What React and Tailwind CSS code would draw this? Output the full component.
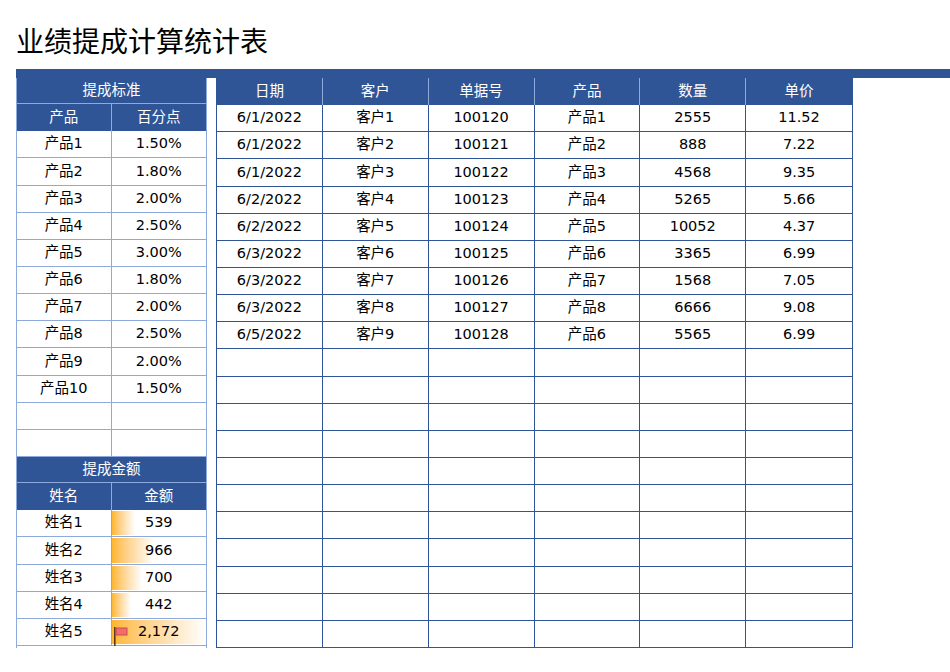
const F = { fontFamily: '"DejaVu Sans","Noto Sans CJK SC",sans-serif' };
const prods = [["产品1","1.50%"],["产品2","1.80%"],["产品3","2.00%"],["产品4","2.50%"],["产品5","3.00%"],["产品6","1.80%"],["产品7","2.00%"],["产品8","2.50%"],["产品9","2.00%"],["产品10","1.50%"],["",""],["",""]];
const amts = [["姓名1",539],["姓名2",966],["姓名3",700],["姓名4",442],["姓名5",2172]];
const rows = [
["6/1/2022","客户1","100120","产品1","2555","11.52"],
["6/1/2022","客户2","100121","产品2","888","7.22"],
["6/1/2022","客户3","100122","产品3","4568","9.35"],
["6/2/2022","客户4","100123","产品4","5265","5.66"],
["6/2/2022","客户5","100124","产品5","10052","4.37"],
["6/3/2022","客户6","100125","产品6","3365","6.99"],
["6/3/2022","客户7","100126","产品7","1568","7.05"],
["6/3/2022","客户8","100127","产品8","6666","9.08"],
["6/5/2022","客户9","100128","产品6","5565","6.99"],
];
while (rows.length < 20) rows.push(["","","","","",""]);
const H = "h-[26.15px] flex items-center justify-center";
const HH = "h-[27.15px] flex items-center justify-center";
export default function App() {
  return (
    <div className="w-[950px] h-[672px] bg-white text-[14.5px] text-black" style={F}>
      <div className="pl-[16px] pt-[25px] h-[69px] text-[28px] leading-[36px]">业绩提成计算统计表</div>
      <div className="ml-[16px] h-[9px] bg-[#2f5597]"></div>
      <div className="flex ml-[16px] gap-[9px]">
        <div className="w-[191px] border-x border-[#8ea9db]">
          <div className={`${H} bg-[#2f5597] text-white border-b border-[#8ea9db]`}>提成标准</div>
          <div className="grid grid-cols-2 bg-[#2f5597] text-white">
            <div className={`${HH} border-r border-[#8ea9db]`}>产品</div><div className={HH}>百分点</div>
          </div>
          {prods.map((p, i) => (
            <div key={i} className="grid grid-cols-2 border-b border-[#8ea9db]">
              <div className={`${H} border-r border-[#8ea9db]`}>{p[0]}</div><div className={H}>{p[1]}</div>
            </div>
          ))}
          <div className={`${H} bg-[#2f5597] text-white border-b border-[#8ea9db]`}>提成金额</div>
          <div className="grid grid-cols-2 bg-[#2f5597] text-white">
            <div className={`${HH} border-r border-[#8ea9db]`}>姓名</div><div className={HH}>金额</div>
          </div>
          {amts.map((a, i) => (
            <div key={i} className="grid grid-cols-2 border-b border-[#8ea9db]">
              <div className={`${H} border-r border-[#8ea9db]`}>{a[0]}</div>
              <div className={`${H} relative`}>
                <div className="absolute left-0 top-[1px] bottom-[1px] bg-gradient-to-r from-[#ffb628] to-white" style={{ width: `${(a[1] / 2172) * 100}%` }}></div>
                {i === 4 && (
                  <svg className="absolute left-[2px] top-[8px]" width="14" height="19" viewBox="0 0 14 19">
                    <rect x="0" y="0" width="1.6" height="19" fill="#5a3a1a" />
                    <rect x="2" y="1" width="11" height="7" fill="#f8696b" stroke="#c0504d" strokeWidth="1" />
                  </svg>
                )}
                <span className="relative">{a[1].toLocaleString("en-US")}</span>
              </div>
            </div>
          ))}
        </div>
        <div className="w-[637px] border-x border-[#2f5597]">
          <div className="grid grid-cols-6 bg-[#2f5597] text-white">
            {["日期","客户","单据号","产品","数量","单价"].map((h, i) => (
              <div key={i} className={`${HH} ${i < 5 ? "border-r border-[#8ea9db]" : ""}`}>{h}</div>
            ))}
          </div>
          {rows.map((r, j) => (
            <div key={j} className="grid grid-cols-6 border-b border-[#2f5597]">
              {r.map((c, i) => (
                <div key={i} className={`${H} ${i < 5 ? "border-r border-[#2f5597]" : ""}`}>{c}</div>
              ))}
            </div>
          ))}
        </div>
      </div>
    </div>
  );
}
